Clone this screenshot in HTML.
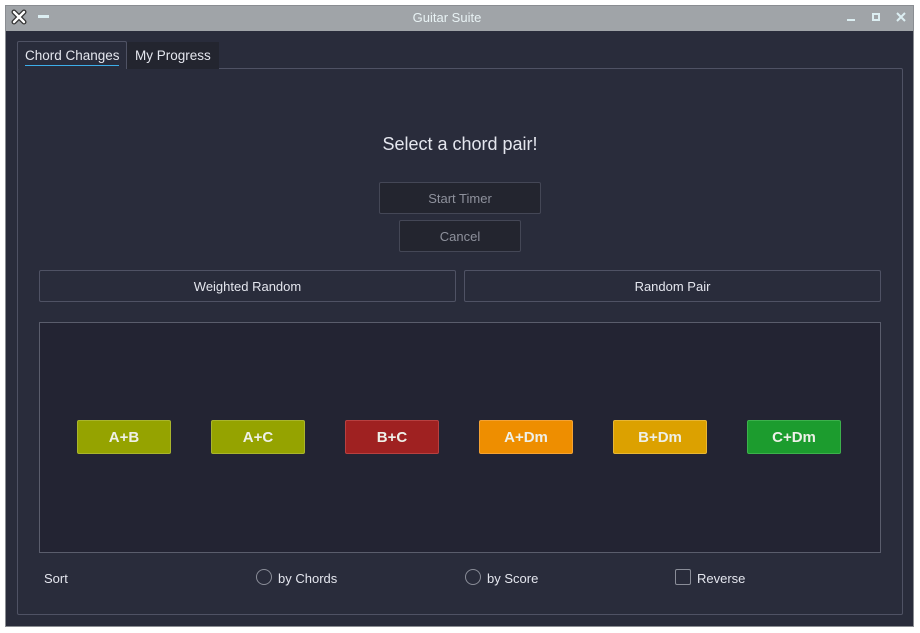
<!DOCTYPE html>
<html><head><meta charset="utf-8"><style>
*{margin:0;padding:0;box-sizing:border-box}
body{width:920px;height:633px;background:#fff;font-family:"Liberation Sans","DejaVu Sans",sans-serif;position:relative;overflow:hidden;font-size:13px;color:#e4e6ee}
.win{position:absolute;left:5px;top:5px;width:909px;height:622px;background:#292c3b;border:1px solid #8a8d92}
.title{position:absolute;left:0;top:0;width:100%;height:25px;background:#a0a4a8}
.a{position:absolute}
.btn{position:absolute;border:1px solid #4f5264;border-radius:2px;background:#292c3b;text-align:center;color:#e4e6ee}
.dis{background:#23252f;color:#8e919c;border-color:#444756}
.chip{position:absolute;top:420px;width:94px;height:34px;border-radius:2px;text-align:center;line-height:33px;font-weight:bold;font-size:15px;color:#eef0e8;font-family:"Liberation Sans",sans-serif}
.radio{position:absolute;width:16px;height:16px;border:1px solid #8a8d98;border-radius:50%}
</style></head><body>
<div class="win">
 <div class="title"></div>
</div>
<div class="a" style="left:0;top:10px;width:894px;text-align:center;color:#e8f2f4;font-size:13px">Guitar Suite</div>
<svg class="a" style="left:10px;top:8px" width="18" height="18" viewBox="0 0 18 18"><path d="M4 4L14 14M14 4L4 14" stroke="#333" stroke-width="5" stroke-linecap="round"/><path d="M4 4L14 14M14 4L4 14" stroke="#fff" stroke-width="2.4" stroke-linecap="round"/></svg>
<div class="a" style="left:38px;top:15px;width:11px;height:3px;background:#dceef2"></div>
<div class="a" style="left:847px;top:19px;width:8px;height:2px;background:#dceef2"></div>
<div class="a" style="left:872px;top:13px;width:8px;height:8px;border:2px solid #dceef2"></div>
<svg class="a" style="left:896px;top:12px" width="10" height="10"><path d="M1 1L9 9M9 1L1 9" stroke="#dceef2" stroke-width="2"/></svg>
<div class="a" style="left:17px;top:68px;width:886px;height:547px;border:1px solid #4f5264;border-radius:2px"></div>
<div class="a" style="left:127px;top:42px;width:92px;height:27px;background:#23252f"></div>
<div class="a" style="left:17px;top:41px;width:110px;height:28px;border:1px solid #4f5264;border-bottom:none;background:#292c3b;border-radius:2px 2px 0 0"></div>
<div class="a" style="left:25px;top:48px;font-size:13.5px">Chord Changes</div>
<div class="a" style="left:25px;top:65px;width:94px;height:1px;background:#3daee9"></div>
<div class="a" style="left:135px;top:48px;font-size:13.5px">My Progress</div>
<div class="a" style="left:0;top:134px;width:920px;text-align:center;font-size:18px">Select a chord pair!</div>
<div class="btn dis" style="left:379px;top:182px;width:162px;height:32px;line-height:31px">Start Timer</div>
<div class="btn dis" style="left:399px;top:220px;width:122px;height:32px;line-height:31px">Cancel</div>
<div class="btn" style="left:39px;top:270px;width:417px;height:32px;line-height:31px">Weighted Random</div>
<div class="btn" style="left:464px;top:270px;width:417px;height:32px;line-height:31px">Random Pair</div>
<div class="a" style="left:39px;top:322px;width:842px;height:231px;border:1px solid #5a5d6c;background:#232433"></div>
<div class="chip" style="left:77px;background:#95a300;border:1px solid #a9b52c">A+B</div>
<div class="chip" style="left:211px;background:#95a300;border:1px solid #a9b52c">A+C</div>
<div class="chip" style="left:345px;background:#9f2121;border:1px solid #b84040">B+C</div>
<div class="chip" style="left:479px;background:#ee8e00;border:1px solid #f4a233">A+Dm</div>
<div class="chip" style="left:613px;background:#dca100;border:1px solid #e8b634">B+Dm</div>
<div class="chip" style="left:747px;background:#1c9c2e;border:1px solid #3cb14c">C+Dm</div>
<div class="a" style="left:44px;top:571px">Sort</div>
<div class="radio" style="left:256px;top:569px"></div>
<div class="a" style="left:278px;top:571px">by Chords</div>
<div class="radio" style="left:465px;top:569px"></div>
<div class="a" style="left:487px;top:571px">by Score</div>
<div class="a" style="left:675px;top:569px;width:16px;height:16px;border:1px solid #8a8d98;border-radius:2px"></div>
<div class="a" style="left:697px;top:571px">Reverse</div>
</body></html>
